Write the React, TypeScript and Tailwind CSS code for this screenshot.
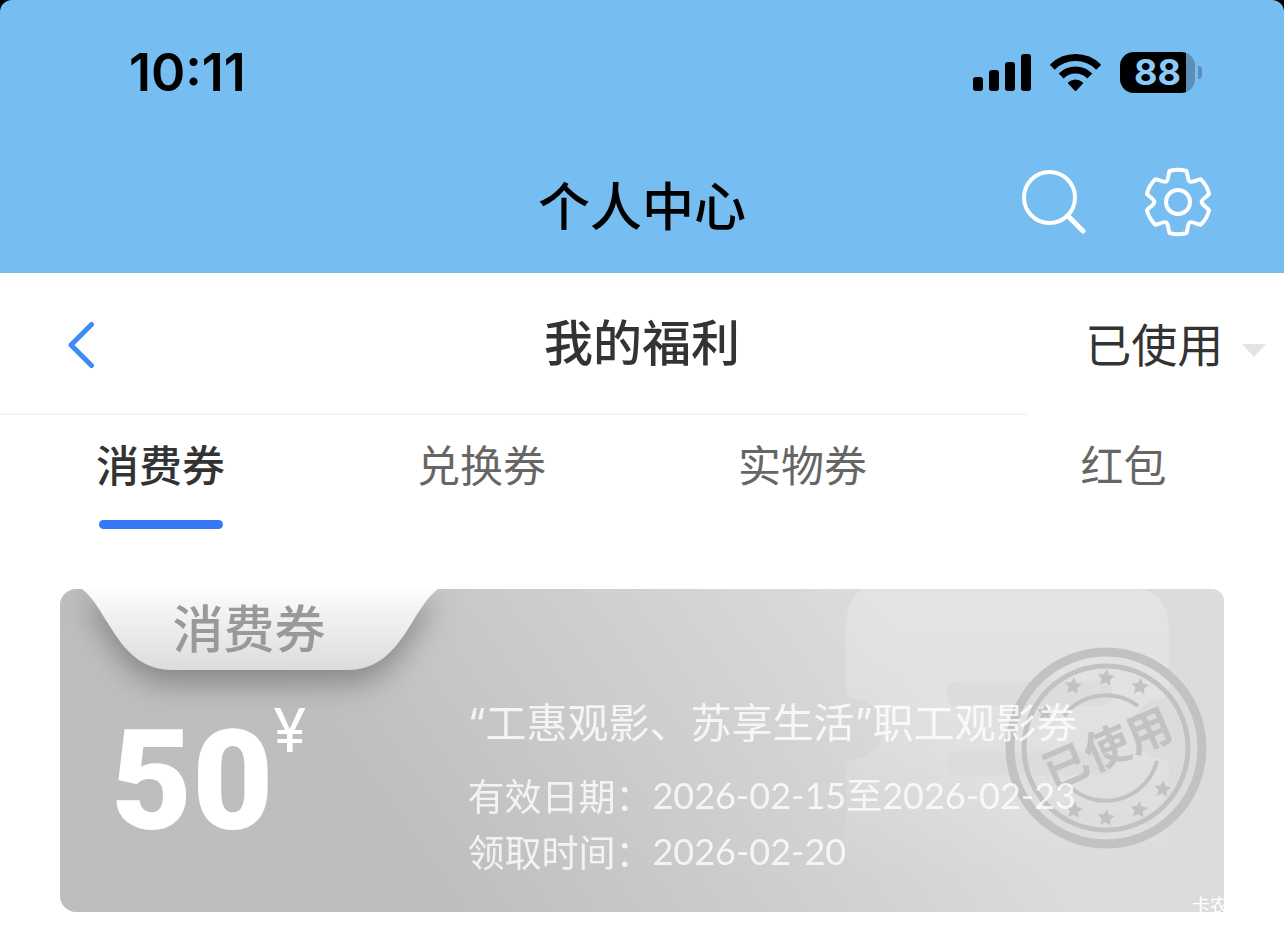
import { useState } from 'react';
import clsx from 'clsx';

const TABS = ['消费券', '兑换券', '实物券', '红包'];

interface Coupon {
  type: string;
  amount: number;
  title: string;
  validFrom: string;
  validTo: string;
  receivedAt: string;
}

const COUPONS: Coupon[] = [
  {
    type: '消费券',
    amount: 50,
    title: '“工惠观影、苏享生活”职工观影券',
    validFrom: '2026-02-15',
    validTo: '2026-02-23',
    receivedAt: '2026-02-20',
  },
];

// One tooth and the valley after it, repeated every 60 degrees
function gearPath() {
  const at = (x: number, y: number, k: number) => {
    const a = (k * Math.PI) / 3;
    const px = x * Math.cos(a) - y * Math.sin(a);
    const py = x * Math.sin(a) + y * Math.cos(a);
    return `${px.toFixed(2)} ${py.toFixed(2)}`;
  };
  let d = `M${at(-8.5, -31, 0)}`;
  for (let k = 0; k < 6; k++) {
    d += `Q${at(0, -33.5, k)} ${at(8.5, -31, k)}L${at(9.5, -27, k)}`;
    d += `C${at(10.5, -19.5, k)} ${at(11.6, -18.8, k)} ${at(18.6, -21.7, k)}L${at(-8.5, -31, k + 1)}`;
  }
  return d + 'Z';
}

function starPoints(cx: number, cy: number, r: number) {
  return Array.from({ length: 10 }, (_, i) => {
    const a = (i * Math.PI) / 5 - Math.PI / 2 + 0.1;
    const rad = i % 2 ? r * 0.48 : r;
    return `${(cx + rad * Math.cos(a)).toFixed(1)},${(cy + rad * Math.sin(a)).toFixed(1)}`;
  }).join(' ');
}

function StatusBar() {
  return (
    <div className="flex h-[146px] items-center justify-between pl-[129px] pr-[82px]">
      <span className="font-['Inter',sans-serif] text-[52px] font-semibold leading-none">10:11</span>
      <div className="mb-0.5 flex items-center gap-[19px]">
        <svg width="58" height="37" viewBox="0 0 58 37" aria-hidden="true">
          <rect x="0" y="23" width="10" height="14" rx="3" />
          <rect x="16" y="16" width="10" height="21" rx="3" />
          <rect x="32" y="8" width="10" height="29" rx="3" />
          <rect x="48" y="0" width="10" height="37" rx="3" />
        </svg>
        <svg width="51" height="37" viewBox="0 0 51 37" fill="none" stroke="#000" strokeWidth="7" aria-hidden="true">
          <path d="M2.3 13.2A32.8 32.8 0 0 1 48.7 13.2" />
          <path d="M11.2 22A20.2 20.2 0 0 1 39.8 22" />
          <path d="M25.5 36L19 29A10 10 0 0 1 32 29Z" fill="#000" strokeWidth="2" strokeLinejoin="round" />
        </svg>
        <div className="flex items-center gap-[3px]">
          <div className="flex h-[41px] w-[75px] items-center justify-center rounded-[14px] bg-[linear-gradient(to_right,#000_66px,#5a8fb8_66px)] font-['Inter',sans-serif] text-[36px] font-bold leading-none text-[#8ccbf8]">
            88
          </div>
          <div className="h-[13px] w-1 rounded-r-full bg-[#5a8fb8]" />
        </div>
      </div>
    </div>
  );
}

function TitleBar() {
  return (
    <div className="grid h-[127px] grid-cols-3 items-center pb-2">
      <h1 className="col-start-2 mb-1 text-center text-[52px] font-medium leading-none">个人中心</h1>
      <div className="mb-2 flex items-center justify-end gap-[58px] pr-[72px]">
        <button aria-label="搜索">
          <svg width="65" height="65" viewBox="0 0 65 65" fill="none" stroke="#fff" strokeWidth="4">
            <circle cx="28.5" cy="28.5" r="25.5" />
            <path d="M47 47L62 62" strokeLinecap="round" strokeWidth="5" />
          </svg>
        </button>
        <button aria-label="设置">
          <svg width="68" height="70" viewBox="-34 -35 68 70" fill="none" stroke="#fff" strokeWidth="4" strokeLinejoin="round">
            <path d={gearPath()} />
            <circle r="12" />
          </svg>
        </button>
      </div>
    </div>
  );
}

function UsedStamp() {
  const stars = [-150, -118, -90, -61, 36, 62, 90, 117];
  return (
    <svg
      className="absolute right-[17px] top-[57px]"
      width="202"
      height="204"
      viewBox="-101 -102 202 204"
      fill="none"
      stroke="#c2c2c2"
      role="img"
      aria-label="已使用"
    >
      <circle r="96" strokeWidth="9" />
      <circle r="82" strokeWidth="5" />
      <path d="M-42 -32A53 53 0 0 1 32 -42" strokeWidth="4" />
      <path d="M-36 39A53 53 0 0 0 51 13" strokeWidth="4" />
      <g fill="#c2c2c2" stroke="none">
        {stars.map((deg) => (
          <polygon
            key={deg}
            points={starPoints(70 * Math.cos((deg * Math.PI) / 180), 70 * Math.sin((deg * Math.PI) / 180), 9)}
          />
        ))}
        <text
          transform="rotate(-23)"
          x="1"
          y="17"
          textAnchor="middle"
          className="font-['Noto_Sans_CJK_SC',sans-serif] text-[45px] font-bold"
        >
          已使用
        </text>
      </g>
    </svg>
  );
}

// Faint ticket drawn behind the right half of the card
function TicketBackdrop() {
  return (
    <svg className="absolute right-0 top-0" width="400" height="323" viewBox="0 0 400 323" aria-hidden="true">
      <defs>
        <linearGradient id="ticketFade" x1="0" y1="0" x2="0" y2="1">
          <stop offset="0" stopColor="#fff" stopOpacity="0.22" />
          <stop offset="0.5" stopColor="#fff" stopOpacity="0.14" />
          <stop offset="0.9" stopColor="#fff" stopOpacity="0" />
        </linearGradient>
      </defs>
      <path
        d="M40 0H312C334 0 345 18 345 40V96Q345 110 333 110A30 30 0 0 0 333 169Q345 169 345 182V323H22V182Q22 169 34 169A30 30 0 0 0 34 110Q22 110 22 96V40C22 18 28 5 40 0Z"
        fill="url(#ticketFade)"
      />
      <rect x="123" y="92" width="165" height="25" rx="9" fill="#d8d8d8" fillOpacity="0.5" />
      <rect x="123" y="162" width="165" height="24" rx="9" fill="#d8d8d8" fillOpacity="0.5" />
    </svg>
  );
}

function CouponCard({ coupon }: { coupon: Coupon }) {
  return (
    <article className="relative flex overflow-hidden rounded-2xl rounded-tr-[12px] rounded-br-none bg-[linear-gradient(55deg,#bebebe_28%,#dcdcdc_74%)] text-white">
      <TicketBackdrop />
      <UsedStamp />

      <div className="relative w-[35%] shrink-0">
        {/* Hanging label */}
        <svg className="absolute left-0 top-0" width="460" height="170" viewBox="0 0 460 170" aria-hidden="true">
          <defs>
            <linearGradient id="labelFill" x1="0" y1="0" x2="0" y2="1">
              <stop offset="0" stopColor="#fcfcfc" />
              <stop offset="1" stopColor="#dcdcdc" />
            </linearGradient>
            <filter id="labelShadow" x="-20%" y="-20%" width="140%" height="220%">
              <feDropShadow dx="0" dy="13" stdDeviation="15" floodColor="#000" floodOpacity="0.3" />
            </filter>
          </defs>
          <path
            d="M22 0C33 8 40 22 53 42C69 67 86 81 114 81H286C314 81 330 67 346 43C359 22 367 8 378 0Z"
            fill="url(#labelFill)"
            filter="url(#labelShadow)"
          />
        </svg>
        <div className="relative flex h-[74px] w-[378px] items-center justify-center text-[51px] font-medium leading-none text-[#999]">
          {coupon.type}
        </div>
        <div className="relative mt-10 flex items-start pl-[51px]">
          <span className="mt-2 font-['Roboto',sans-serif] text-[140px] font-black leading-[140px]">{coupon.amount}</span>
          <span className="font-['Inter',sans-serif] text-[60px] leading-[54px]">¥</span>
        </div>
      </div>

      <div className="relative flex-1 whitespace-nowrap pb-[33px] pt-[106px] opacity-80">
        <h3 className="font-['Inter','Noto_Sans_CJK_SC',sans-serif] text-[41px] leading-[56px]">{coupon.title}</h3>
        <dl className="mt-4 text-[37px] leading-[56px]">
          <div className="flex">
            <dt>有效日期：</dt>
            <dd className="font-['Lato','Noto_Sans_CJK_SC',sans-serif] text-[36px]">
              {coupon.validFrom}至{coupon.validTo}
            </dd>
          </div>
          <div className="flex">
            <dt>领取时间：</dt>
            <dd className="font-['Lato','Noto_Sans_CJK_SC',sans-serif] text-[36px]">{coupon.receivedAt}</dd>
          </div>
        </dl>
      </div>
    </article>
  );
}

export default function App() {
  const [active, setActive] = useState(0);
  const [status, setStatus] = useState('已使用');

  return (
    <div className="min-h-screen bg-white font-['Noto_Sans_CJK_SC',sans-serif] text-black">
      <div className="bg-black">
        <header className="rounded-t-[12px] bg-[#76bdf2]">
          <StatusBar />
          <TitleBar />
        </header>
      </div>

      <div className="grid h-[142px] grid-cols-5 text-[#333]">
        <div className="flex items-center border-b-2 border-[#f4f4f4] pl-[67px] pt-1">
          <button aria-label="返回">
            <svg width="28" height="48" viewBox="0 0 28 48" fill="none" stroke="#3f8bf5" strokeWidth="5" strokeLinecap="round" strokeLinejoin="round">
              <path d="M24.5 3.5L4 24L24.5 44.5" />
            </svg>
          </button>
        </div>
        <h2 className="col-span-3 flex items-center justify-center border-b-2 border-[#f4f4f4] pb-2 text-[49px] font-medium leading-none">
          我的福利
        </h2>
        <label className="relative flex items-center pb-1">
          <select
            aria-label="使用状态"
            value={status}
            onChange={(e) => setStatus(e.target.value)}
            className="w-full appearance-none bg-transparent pl-[58px] text-[46px] leading-[64px] outline-none"
          >
            <option>未使用</option>
            <option>已使用</option>
            <option>已过期</option>
          </select>
          <svg className="pointer-events-none absolute right-[18px] top-[71px]" width="24" height="13" viewBox="0 0 24 13" aria-hidden="true">
            <path d="M0 0H24L12 13Z" fill="#e4e4e4" />
          </svg>
        </label>
      </div>

      <div role="tablist" className="grid grid-cols-4">
        {TABS.map((tab, i) => (
          <button
            key={tab}
            role="tab"
            aria-selected={i === active}
            onClick={() => setActive(i)}
            className={clsx(
              'flex flex-col items-center pt-4 text-[43px] leading-[64px]',
              i === active ? 'font-medium text-[#333]' : 'text-[#666]'
            )}
          >
            {tab}
            <span className={clsx('mt-[25px] h-[9px] w-[124px] rounded-full', i === active && 'bg-[#3478f6]')} />
          </button>
        ))}
      </div>

      <main className="relative px-[60px] pt-[60px]">
        {COUPONS.map((coupon) => (
          <CouponCard key={coupon.title} coupon={coupon} />
        ))}
        {/* Watermark, runs past the card onto the white page */}
        <span className="absolute bottom-0 right-14 text-[18px] leading-4 text-white">卡农</span>
      </main>
    </div>
  );
}
